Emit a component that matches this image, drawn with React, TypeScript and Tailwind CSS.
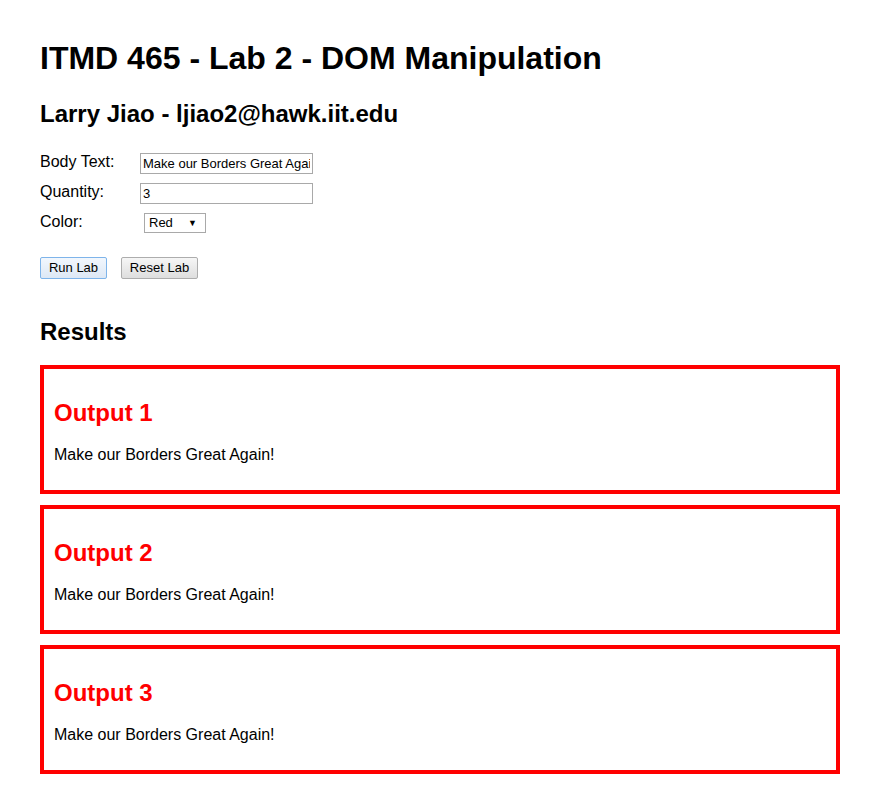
import React from "react";

const outputs = [1, 2, 3];

export default function App() {
  return (
    <div className="min-h-screen bg-white px-10 pt-[40px] pb-6 font-['Liberation_Sans',Arial,sans-serif] text-black">
      <h1 className="text-[32px] leading-[37px] font-bold">ITMD 465 - Lab 2 - DOM Manipulation</h1>
      <h2 className="mt-[23px] text-[24px] leading-[28px] font-bold">Larry Jiao - ljiao2@hawk.iit.edu</h2>

      {/* form */}
      <div className="mt-[23px] flex flex-col text-[16px] leading-[18px]">
        <div className="flex h-[30px] items-start">
          <label className="w-[100px] pt-[2px]">Body Text:</label>
          <input
            readOnly
            defaultValue="Make our Borders Great Again!"
            className="mt-[2px] h-[21px] w-[173px] border border-[#a9a9a9] px-[2px] text-[13px] text-black outline-none"
          />
        </div>
        <div className="flex h-[30px] items-start">
          <label className="w-[100px] pt-[2px]">Quantity:</label>
          <input
            readOnly
            defaultValue="3"
            className="mt-[2px] h-[21px] w-[173px] border border-[#a9a9a9] px-[2px] text-[13px] text-black outline-none"
          />
        </div>
        <div className="flex h-[30px] items-start">
          <label className="w-[104px] pt-[2px]">Color:</label>
          <div className="mt-[2px] flex h-[20px] w-[62px] items-center justify-between border border-[#a9a9a9] pl-[4px] pr-[8px] text-[13px]">
            <span>Red</span>
            <span className="text-[9px]">▼</span>
          </div>
        </div>
      </div>

      <div className="mt-[16px] flex gap-[14px]">
        <button className="h-[22px] w-[67px] rounded-[2px] border border-[#7eb4ea] bg-gradient-to-b from-[#f2f7fd] to-[#dde8f5] text-[13px]">
          Run Lab
        </button>
        <button className="h-[22px] w-[77px] rounded-[2px] border border-[#adadad] bg-gradient-to-b from-[#f6f6f6] to-[#dedede] text-[13px]">
          Reset Lab
        </button>
      </div>

      <h2 className="mt-[39px] text-[24px] leading-[28px] font-bold">Results</h2>

      <div className="mt-[19px] flex flex-col gap-[11px]">
        {outputs.map((n) => (
          <div key={n} className="h-[129px] border-4 border-[#ff0000] px-[10px] pt-[30px]">
            <h3 className="text-[24px] leading-[28px] font-bold text-[#ff0000]">Output {n}</h3>
            <p className="mt-[19px] text-[16px] leading-[18px]">Make our Borders Great Again!</p>
          </div>
        ))}
      </div>
    </div>
  );
}
